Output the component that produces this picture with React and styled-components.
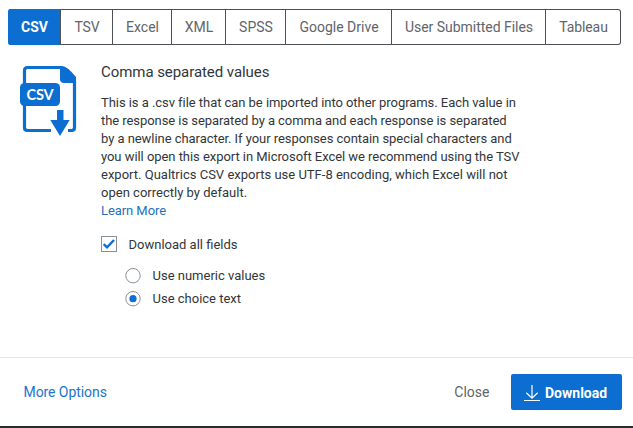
import React from "react";
import styled, { createGlobalStyle } from "styled-components";

const GlobalStyle = createGlobalStyle`
  * { box-sizing: border-box; }
  body {
    margin: 0;
    background: #fff;
    color: #32363a;
    font-family: Roboto, "Liberation Sans", sans-serif;
    font-size: 13px;
  }
`;

const Dialog = styled.div`
  display: flex;
  flex-direction: column;
  height: 428px;
  padding-top: 9px;
  overflow: hidden;
  border-bottom: 2px solid #2b2c2f;
`;

const TabBar = styled.div`
  display: flex;
  flex: none;
  width: 613px;
  height: 36px;
  margin-left: 8px;
  border: 1px solid #4d5055;
  border-left: 0;
  border-radius: 3px;
`;

const Tab = styled.button`
  flex: none;
  width: ${(p) => p.$width}px;
  height: 36px;
  margin: -1px 0;
  padding: 0 0 0 1px;
  border: 0;
  border-right: ${(p) => (p.$last ? "0" : "1px solid #4d5055")};
  border-radius: ${(p) => (p.$active ? "3px 0 0 3px" : "0")};
  background: ${(p) => (p.$active ? "#0b6ed0" : "transparent")};
  color: ${(p) => (p.$active ? "#fff" : "#61656a")};
  font: ${(p) => (p.$active ? 700 : 400)} 14px Roboto, sans-serif;
  letter-spacing: ${(p) => p.$spacing || 0}px;
  white-space: nowrap;
`;

const Content = styled.main`
  display: flex;
  flex: 1;
  padding: 19px 0 0 20px;
`;

const FileIcon = styled.svg`
  flex: none;
  width: 58px;
  height: 74px;
  margin-right: 23px;
`;

const Details = styled.section`
  display: flex;
  flex-direction: column;
`;

const Title = styled.h1`
  margin: -1px 0 13px;
  font-size: 15px;
  font-weight: 400;
  line-height: 18px;
  letter-spacing: -0.06px;
`;

const Description = styled.p`
  margin: 0;
  line-height: 18px;
`;

const Line = styled.span`
  display: block;
  white-space: nowrap;
  letter-spacing: ${(p) => p.$spacing}px;
`;

const Link = styled.a`
  color: ${(p) => (p.$large ? "#1b74d0" : "#2272b9")};
  font-size: ${(p) => (p.$large ? 14 : 13)}px;
  line-height: 18px;
  letter-spacing: -0.07px;
`;

const Option = styled.label`
  display: flex;
  align-items: center;
  gap: 11.5px;
  height: ${(p) => (p.$nested ? 23 : 18)}px;
  margin-top: ${(p) => p.$top || 0}px;
  margin-left: ${(p) => (p.$nested ? 24 : 0)}px;
`;

const Control = styled.svg`
  flex: none;
  width: 16px;
  height: 16px;
`;

const Footer = styled.footer`
  display: flex;
  align-items: center;
  flex: none;
  height: 69px;
  padding: 0 11px 0 23.5px;
  border-top: 1px solid #e5e5e5;
`;

const CloseButton = styled.button`
  margin-left: auto;
  padding: 0;
  border: 0;
  background: none;
  color: #61656a;
  font: 14px Roboto, sans-serif;
`;

const DownloadButton = styled.button`
  display: flex;
  align-items: center;
  gap: 5px;
  width: 111px;
  height: 36px;
  margin-left: 21.5px;
  padding: 1px 0 0 13px;
  border: 0;
  border-radius: 2px;
  background: #0b6ed0;
  color: #fff;
  font: 700 14px Roboto, sans-serif;
`;

const tabs = [
  ["CSV", 53, 0], ["TSV", 52, -0.15], ["Excel", 59, 0], ["XML", 54, 0],
  ["SPSS", 60, 0], ["Google Drive", 106, 0],
  ["User Submitted Files", 154, -0.03], ["Tableau", 74, -0.1],
];

const lines = [
  ["This is a .csv file that can be imported into other programs. Each value in", -0.05],
  ["the response is separated by a comma and each response is separated", -0.062],
  ["by a newline character. If your responses contain special characters and", -0.052],
  ["you will open this export in Microsoft Excel we recommend using the TSV", -0.05],
  ["export. Qualtrics CSV exports use UTF-8 encoding, which Excel will not", 0.005],
  ["open correctly by default.", 0.01],
];

function CsvFile() {
  return (
    <FileIcon viewBox="0 0 58 74" aria-hidden="true">
      <path d="M31 66.5H7.5Q4.5 66.5 4.5 63.5V6.5Q4.5 3.5 7.5 3.5H41L54.5 17V63.5Q54.5 66.5 51.5 66.5H48" fill="none" stroke="#0b6ed0" strokeWidth="3.2" />
      <path d="M40 2H42Q47 2 56 13V19H44Q40 19 40 15Z" fill="#0b6ed0" />
      <rect x="0" y="19" width="40" height="23" rx="4.5" fill="#0b6ed0" />
      <path d="M37 46H43.5V56H49.7L40 72L30.3 56H37Z" fill="#0b6ed0" />
      <text x="20" y="36" textAnchor="middle" textLength="27" fill="#fff" fontFamily="Lato, sans-serif" fontWeight="700" fontSize="14.5">CSV</text>
    </FileIcon>
  );
}

function Radio({ selected }) {
  return (
    <Control viewBox="0 0 16 16">
      <circle cx="8" cy="7.7" r="7.2" fill="#fff" stroke="#89919a" />
      {selected && <circle cx="8" cy="7.7" r="3.6" fill="#0b6ed0" />}
    </Control>
  );
}

export default function App() {
  return (
    <Dialog>
      <GlobalStyle />
      <TabBar>
        {tabs.map(([label, width, spacing], i) => (
          <Tab key={label} $width={width} $spacing={spacing} $active={i === 0} $last={i === tabs.length - 1}>
            {label}
          </Tab>
        ))}
      </TabBar>
      <Content>
        <CsvFile />
        <Details>
          <Title>Comma separated values</Title>
          <Description>
            {lines.map(([text, spacing]) => (
              <Line key={text} $spacing={spacing}>{text}</Line>
            ))}
          </Description>
          <Link>Learn More</Link>
          <Option $top={15}>
            <Control viewBox="0 0 16 16">
              <rect x="0.5" y="0.5" width="15" height="15" fill="#fff" stroke="#89919a" />
              <path d="M2.7 8.2L6 11.3L13 4" fill="none" stroke="#0b6ed0" strokeWidth="2.4" />
            </Control>
            Download all fields
          </Option>
          <Option $nested $top={11}><Radio />Use numeric values</Option>
          <Option $nested><Radio selected />Use choice text</Option>
        </Details>
      </Content>
      <Footer>
        <Link $large>More Options</Link>
        <CloseButton>Close</CloseButton>
        <DownloadButton>
          <Control viewBox="0 0 16 16">
            <path d="M8 0V13M2.3 7.7L8 13.2L13.7 7.7M0 15.5H16" fill="none" stroke="#fff" strokeWidth="1.2" />
          </Control>
          Download
        </DownloadButton>
      </Footer>
    </Dialog>
  );
}
